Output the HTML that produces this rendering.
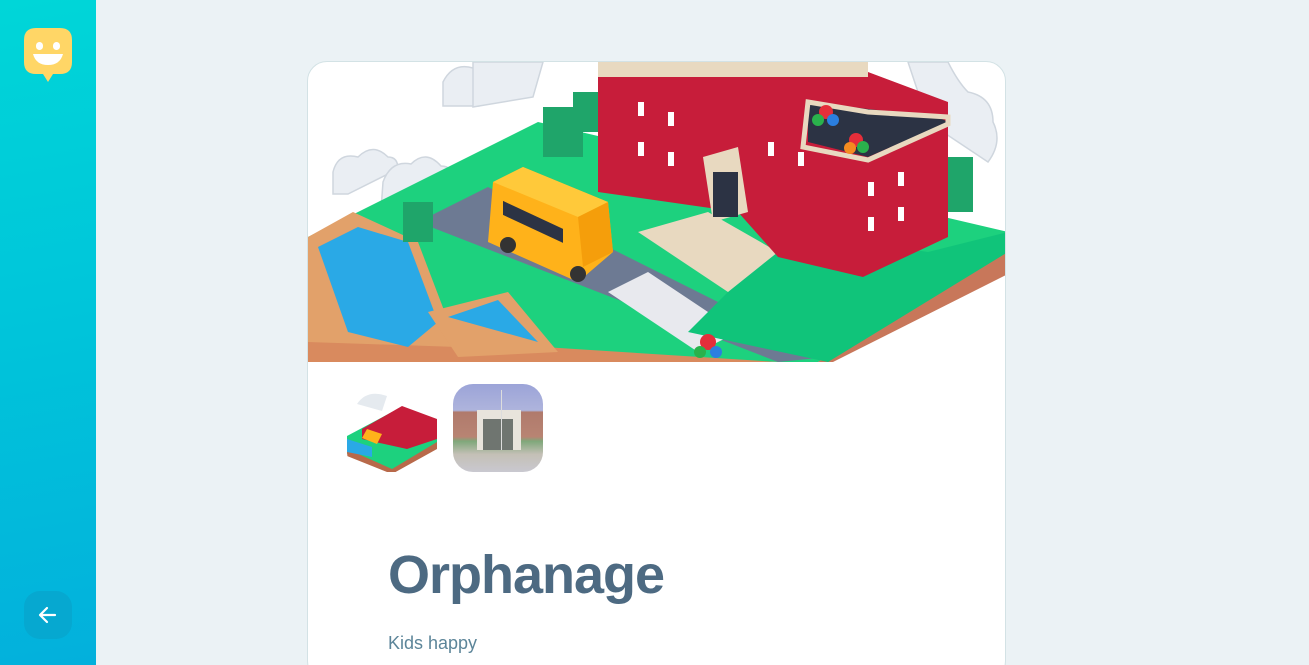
<!DOCTYPE html>
<html><head><meta charset="utf-8"><style>
*{margin:0;padding:0;box-sizing:border-box}
html,body{width:1309px;height:665px;overflow:hidden}
body{background:#ebf2f5;font-family:"Liberation Sans",sans-serif;position:relative}
.side{position:absolute;left:0;top:0;width:96px;height:665px;background:linear-gradient(170deg,#00d6d8 0%,#00c4da 50%,#03b0dc 100%)}
.back{position:absolute;left:24px;top:591px;width:48px;height:48px;border-radius:16px;background:#06a8d0}
.card{position:absolute;left:307px;top:61px;width:699px;height:620px;background:#fff;border:1px solid #d3e2e5;border-radius:20px;overflow:hidden}
.th{position:absolute;top:322px;width:90px;height:88px;border-radius:20px;overflow:hidden}
h1{position:absolute;left:80px;top:482px;font-size:54px;letter-spacing:-1px;color:#4d6a82;font-weight:bold}
p{position:absolute;left:80px;top:571px;font-size:18px;color:#5c8599}
</style></head><body>
<div class="side">
<svg style="position:absolute;left:24px;top:28px" width="48" height="56" viewBox="0 0 48 56">
<path d="M12 0H36Q48 0 48 12V34Q48 46 36 46H29L24 54L19 46H12Q0 46 0 34V12Q0 0 12 0Z" fill="#ffd666"/>
<rect x="12" y="14" width="7" height="8" rx="3.5" fill="#fff"/><rect x="29" y="14" width="7" height="8" rx="3.5" fill="#fff"/>
<path d="M9 26H39Q36 37 24 37Q12 37 9 26Z" fill="#fff"/>
</svg>
<div class="back"><svg width="48" height="48" viewBox="0 0 48 48"><path d="M31 24H17M23 17L16 24L23 31" stroke="#fff" stroke-width="2.2" fill="none" stroke-linecap="round" stroke-linejoin="round"/></svg></div>
</div>
<div class="card">
<svg width="699" height="300" viewBox="0 0 699 300" style="position:absolute;left:0;top:0">
<g fill="#eaeef3" stroke="#cfd6de" stroke-width="1.5">
<path d="M135 20q10-20 30-14q15-10 28 4q18-4 18 14l-40 20h-36z"/>
<path d="M165 0l70 0l-10 35l-60 10z"/>
<path d="M25 110q5-20 25-15q15-15 30 0q10 0 10 12l-50 25h-15z"/>
<path d="M75 120q8-22 28-18q15-15 30 2q12 0 12 14l-60 30h-12z"/>
<path d="M600 0h40q10 20 20 30q25 5 25 30q10 20 -5 40l-60-40z"/>
</g>
<path d="M0 175L230 60L700 170L700 200L510 300H470L0 280Z" fill="#1dd17e"/>
<path d="M0 270L470 300H0Z" fill="#d98a5e"/>
<path d="M700 185L510 300H525L700 212Z" fill="#c8775a"/>
<path d="M110 160L180 125L520 295L470 300Z" fill="#6d7a93"/>
<path d="M300 230L340 210L430 270L390 290Z" fill="#e8e9ee"/>
<path d="M0 175L45 150L110 180L150 285L0 280Z" fill="#e2a16a"/>
<path d="M10 185L50 165L100 180L130 260L100 285L40 270Z" fill="#2aa9e6"/>
<path d="M120 250L200 230L250 290L150 295Z" fill="#e2a16a"/>
<path d="M140 255L190 238L230 280Z" fill="#2aa9e6"/>
<path d="M380 270L480 170L620 190L700 170L700 190L520 300Z" fill="#10c47a"/>
<path d="M330 170L400 150L470 190L420 230Z" fill="#e8d9c0"/>
<g fill="#1fa56a"><rect x="235" y="45" width="40" height="50"/><rect x="95" y="140" width="30" height="40"/><rect x="640" y="95" width="25" height="55"/><rect x="265" y="30" width="30" height="40"/></g>
<path d="M290 0H560L560 10L640 40L640 175L555 215L470 195L430 150L290 130Z" fill="#c71d3a"/>
<path d="M290 0H560V15H290Z" fill="#e8d9c0"/>
<path d="M500 40L630 55L640 60L560 95L500 80Z" fill="#2c3344"/>
<path d="M500 40L560 50L640 55L640 62L560 98L495 85Z" fill="none" stroke="#e8d9c0" stroke-width="5"/>
<path d="M395 95L430 85L440 150L405 160Z" fill="#e8d9c0"/>
<path d="M405 110h25v45h-25z" fill="#2c3344"/>
<g fill="#fff"><rect x="330" y="40" width="6" height="14"/><rect x="360" y="50" width="6" height="14"/><rect x="330" y="80" width="6" height="14"/><rect x="360" y="90" width="6" height="14"/><rect x="460" y="80" width="6" height="14"/><rect x="490" y="90" width="6" height="14"/><rect x="560" y="120" width="6" height="14"/><rect x="590" y="110" width="6" height="14"/><rect x="560" y="155" width="6" height="14"/><rect x="590" y="145" width="6" height="14"/></g>
<path d="M185 120L215 105L300 140L305 190L270 220L180 180Z" fill="#ffb21a"/>
<path d="M185 120L215 105L300 140L270 155Z" fill="#ffc93a"/>
<path d="M270 155L300 140L305 190L275 205Z" fill="#f59e0b"/>
<g fill="#2c3344"><rect x="195" y="138" width="60" height="14" transform="skewY(25) translate(0,-90)"/></g>
<circle cx="200" cy="183" r="8" fill="#333"/><circle cx="270" cy="212" r="8" fill="#333"/>
<g><circle cx="518" cy="50" r="7" fill="#e52e3a"/><circle cx="510" cy="58" r="6" fill="#2ab24c"/><circle cx="525" cy="58" r="6" fill="#2b7fe0"/><circle cx="548" cy="78" r="7" fill="#e52e3a"/><circle cx="542" cy="86" r="6" fill="#f48b20"/><circle cx="555" cy="85" r="6" fill="#2ab24c"/><circle cx="400" cy="280" r="8" fill="#e52e3a"/><circle cx="392" cy="290" r="6" fill="#2ab24c"/><circle cx="408" cy="290" r="6" fill="#2b7fe0"/></g>
</svg>
<div class="th" style="left:39px">
<svg width="90" height="88" viewBox="0 0 90 88"><path d="M0 52L45 28L90 45V60L45 88L0 70Z" fill="#1dd17e"/><path d="M0 65L45 85L90 58V65L45 90L0 72Z" fill="#b8694a"/><path d="M15 45L55 22L90 35V55L60 65L15 55Z" fill="#c71d3a"/><path d="M10 20q10-15 30-8l-5 15z" fill="#e5eaef"/><path d="M20 45l15 5l-5 10l-15-6z" fill="#ffb21a"/><path d="M0 55l25 8l0 10l-25-5z" fill="#2aa9e6"/></svg></div>
<div class="th" style="left:145px;background:linear-gradient(#9ca4d8 0%,#aeb4dc 30%,#b07a6c 32%,#b88473 60%,#7fa77a 65%,#c4c0b6 80%,#c9c8d0 100%)">
<div style="position:absolute;left:24px;top:26px;width:44px;height:40px;background:#e8e4dc"></div>
<div style="position:absolute;left:30px;top:35px;width:30px;height:31px;background:#6f7570"></div>
<div style="position:absolute;left:48px;top:6px;width:1px;height:60px;background:#ddd"></div>
</div>
<h1>Orphanage</h1>
<p>Kids happy</p>
</div>
</body></html>
